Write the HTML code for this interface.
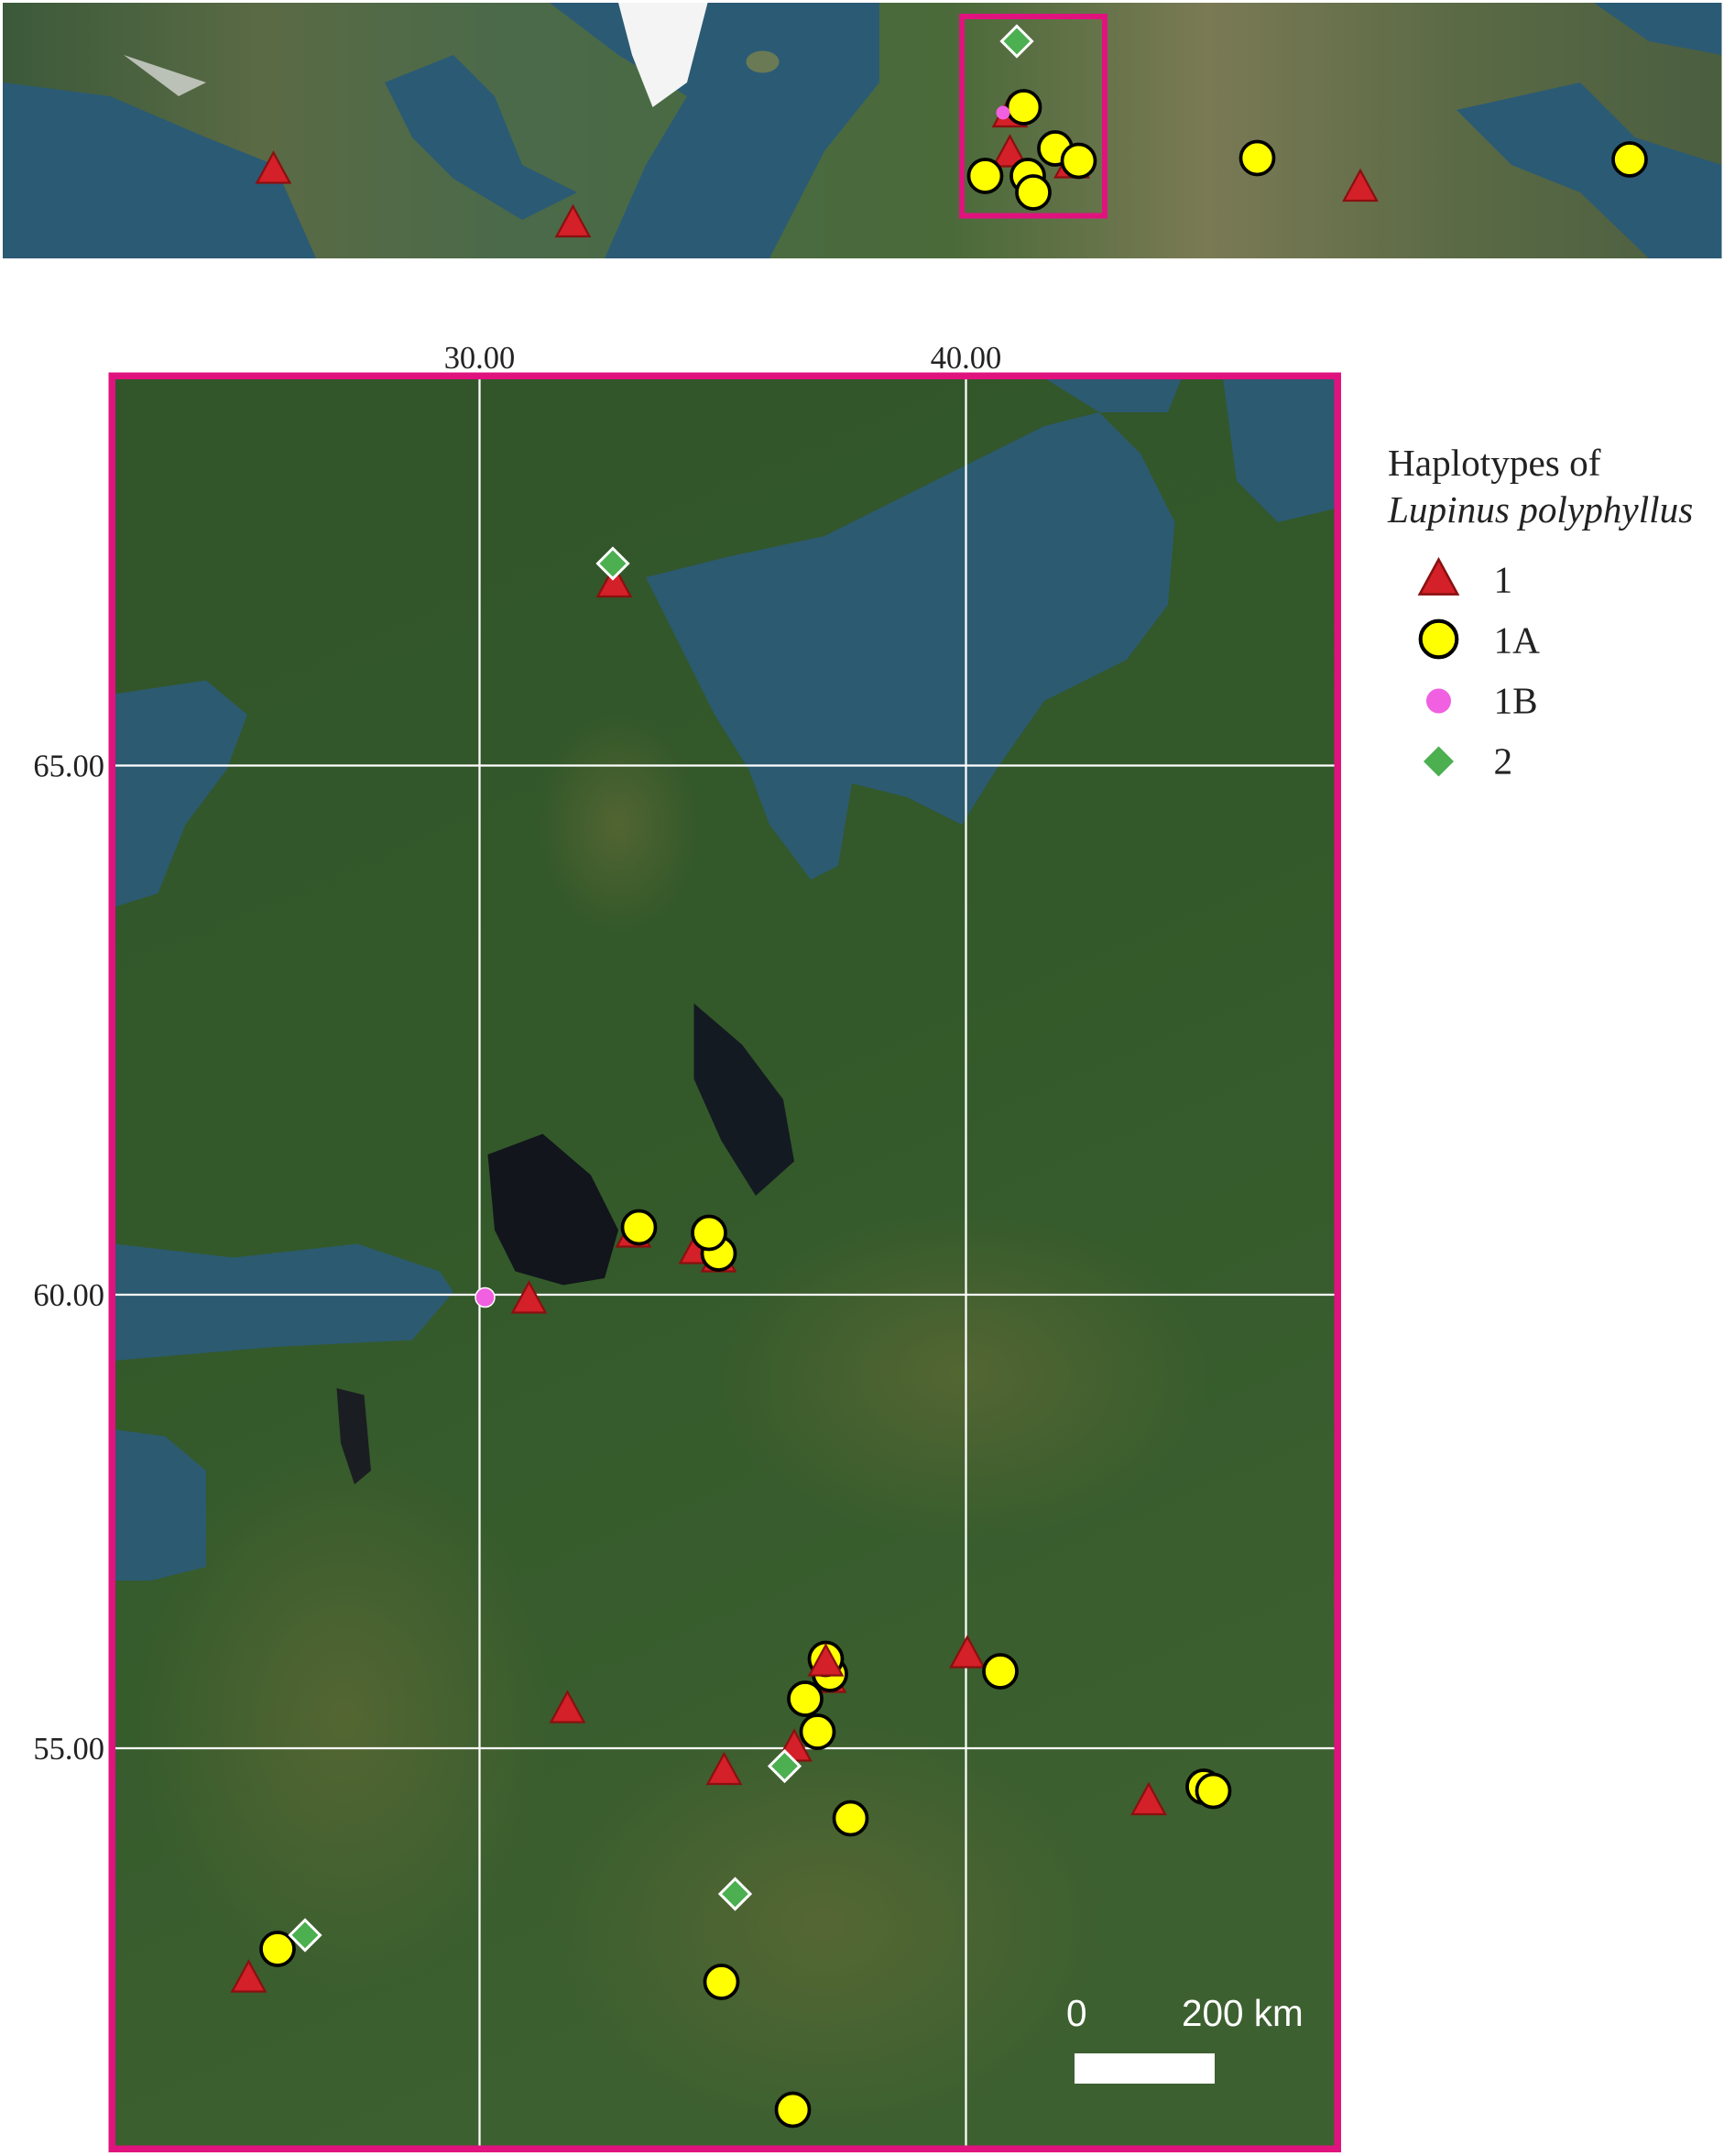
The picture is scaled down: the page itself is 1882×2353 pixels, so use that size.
<!DOCTYPE html>
<html><head><meta charset="utf-8"><style>html,body{margin:0;padding:0;background:#fff}svg{display:block}</style></head><body>
<svg width="1882" height="2353" viewBox="0 0 1254.67 1568.67" xmlns="http://www.w3.org/2000/svg">
<defs>
<linearGradient id="top" x1="0" x2="1" y1="0" y2="0">
<stop offset="0" stop-color="#3b5a3a"/><stop offset="0.15" stop-color="#5a6a45"/><stop offset="0.3" stop-color="#4a6a4a"/><stop offset="0.55" stop-color="#4a6a3a"/><stop offset="0.7" stop-color="#7a7a55"/><stop offset="0.85" stop-color="#5a6a45"/><stop offset="1" stop-color="#4a5e40"/>
</linearGradient>
<linearGradient id="land" x1="0" x2="0.3" y1="0" y2="1">
<stop offset="0" stop-color="#32552a"/><stop offset="0.5" stop-color="#33592a"/><stop offset="1" stop-color="#3d6030"/>
</linearGradient>
<radialGradient id="brn" cx="0.5" cy="0.5" r="0.5"><stop offset="0" stop-color="#5f6a35" stop-opacity="0.7"/><stop offset="1" stop-color="#5f6a35" stop-opacity="0"/></radialGradient>
<clipPath id="mc"><rect x="83" y="275" width="889" height="1287"/></clipPath>
<g id="tri"><path d="M0,-13 L12,9 L-12,9 Z" fill="#d42028" stroke="#8a1010" stroke-width="1.5"/></g>
<g id="cir"><circle r="12" fill="#ffff00" stroke="#000" stroke-width="2.5"/></g>
<g id="dia"><path d="M0,-11 L11,0 L0,11 L-11,0 Z" fill="#4caf50" stroke="#fff" stroke-width="2"/></g>
</defs>
<rect x="2" y="2" width="1251" height="186" fill="url(#top)"/>
<path d="M2,60 L80,70 L150,100 L200,120 L230,188 L2,188 Z" fill="#2b5a75"/>
<path d="M280,60 L330,40 L360,70 L380,120 L420,140 L380,160 L330,130 L300,100 Z" fill="#2b5a75"/>
<path d="M400,2 L640,2 L640,60 L600,110 L560,188 L440,188 L470,120 L500,70 L450,40 Z" fill="#2b5a75"/>
<path d="M450,2 L515,2 L500,60 L475,78 L460,40 Z" fill="#f4f4f4"/>
<path d="M90,40 L150,60 L130,70 Z" fill="#e8e8e8" opacity="0.7"/>
<path d="M1060,80 L1150,60 L1190,100 L1253,120 L1253,188 L1200,188 L1150,140 L1100,120 Z" fill="#2b5a75"/>
<path d="M1160,2 L1253,2 L1253,40 L1200,30 Z" fill="#2b5a75"/>
<ellipse cx="555" cy="45" rx="12" ry="8" fill="#6a7a55"/>
<rect x="700" y="12" width="104" height="145" fill="none" stroke="#e0137e" stroke-width="4"/>
<use href="#tri" x="199" y="124"/><use href="#tri" x="417" y="163"/><use href="#tri" x="735" y="83"/><use href="#tri" x="735" y="112"/><use href="#tri" x="780" y="120"/><use href="#tri" x="990" y="137"/>
<use href="#cir" x="745" y="78"/><use href="#cir" x="768" y="108"/><use href="#cir" x="785" y="117"/><use href="#cir" x="717" y="128"/><use href="#cir" x="748" y="128"/><use href="#cir" x="752" y="140"/><use href="#cir" x="915" y="115"/><use href="#cir" x="1186" y="116"/>
<circle cx="730" cy="82" r="5" fill="#f060e0"/>
<use href="#dia" x="740" y="30"/>
<g clip-path="url(#mc)">
<rect x="83" y="275" width="889" height="1287" fill="url(#land)"/>
<ellipse cx="450" cy="600" rx="60" ry="80" fill="url(#brn)"/>
<ellipse cx="600" cy="1400" rx="200" ry="150" fill="url(#brn)"/>
<ellipse cx="700" cy="1000" rx="180" ry="120" fill="url(#brn)"/>
<ellipse cx="250" cy="1250" rx="150" ry="200" fill="url(#brn)"/>
<path d="M470,420 L530,405 L600,390 L660,360 L720,330 L760,310 L800,300 L830,330 L855,380 L850,440 L820,480 L760,510 L725,560 L700,600 L660,580 L620,570 L610,630 L590,640 L560,600 L545,560 L520,520 L500,480 Z" fill="#2c5a70"/>
<path d="M760,275 L860,275 L850,300 L800,300 Z" fill="#2c5a70"/>
<path d="M890,275 L972,275 L972,370 L930,380 L900,350 Z" fill="#2c5a70"/>
<path d="M83,505 L150,495 L180,520 L165,560 L135,600 L115,650 L83,660 Z" fill="#2c5a70"/>
<path d="M83,905 L170,915 L260,905 L320,925 L330,940 L300,975 L200,980 L83,990 Z" fill="#2c5a70"/>
<path d="M83,1040 L120,1045 L150,1070 L150,1140 L110,1150 L83,1150 Z" fill="#2c5a70"/>
<path d="M355,840 L395,825 L430,855 L450,895 L440,930 L410,935 L375,925 L360,895 Z" fill="#12151c"/>
<path d="M505,730 L540,760 L570,800 L578,845 L550,870 L525,830 L505,785 Z" fill="#141a22"/>
<path d="M245,1010 L265,1015 L270,1070 L258,1080 L248,1050 Z" fill="#1a1e22"/>
<g stroke="#fff" stroke-width="1.5">
<line x1="349" y1="275" x2="349" y2="1562"/><line x1="703" y1="275" x2="703" y2="1562"/>
<line x1="83" y1="557" x2="972" y2="557"/><line x1="83" y1="942" x2="972" y2="942"/><line x1="83" y1="1272" x2="972" y2="1272"/>
</g>
<use href="#tri" x="447" y="425"/><use href="#tri" x="385" y="946"/><use href="#tri" x="461" y="898"/><use href="#tri" x="507" y="910"/><use href="#tri" x="523" y="916"/><use href="#tri" x="413" y="1244"/><use href="#tri" x="527" y="1289"/><use href="#tri" x="603" y="1222"/><use href="#tri" x="578" y="1272"/><use href="#tri" x="704" y="1204"/><use href="#tri" x="836" y="1311"/><use href="#tri" x="181" y="1440"/>
<use href="#cir" x="523" y="912"/><use href="#cir" x="465" y="893"/><use href="#cir" x="516" y="897"/><use href="#cir" x="604" y="1218"/><use href="#cir" x="601" y="1207"/><use href="#tri" x="601" y="1210"/><use href="#cir" x="586" y="1236"/><use href="#cir" x="595" y="1260"/><use href="#cir" x="728" y="1216"/><use href="#cir" x="619" y="1323"/><use href="#cir" x="876" y="1300"/><use href="#cir" x="883" y="1303"/><use href="#cir" x="525" y="1442"/><use href="#cir" x="577" y="1535"/><use href="#cir" x="202" y="1418"/>
<use href="#dia" x="446" y="410"/><use href="#dia" x="571" y="1285"/><use href="#dia" x="535" y="1378"/><use href="#dia" x="222" y="1408"/>
<circle cx="353" cy="944" r="7" fill="#f060e0" stroke="#fff" stroke-width="1"/>
<g font-family="Liberation Sans, sans-serif" font-size="27" fill="#fff">
<text x="776" y="1474">0</text><text x="860" y="1474">200 km</text>
</g>
<rect x="782" y="1494" width="102" height="22" fill="#fff"/>
</g>
<rect x="81.5" y="273.5" width="892" height="1290" fill="none" stroke="#e0137e" stroke-width="5"/>
<g font-family="Liberation Serif, serif" font-size="23" fill="#222">
<text x="349" y="268" text-anchor="middle">30.00</text><text x="703" y="268" text-anchor="middle">40.00</text>
<text x="76" y="565" text-anchor="end">65.00</text><text x="76" y="950" text-anchor="end">60.00</text><text x="76" y="1280" text-anchor="end">55.00</text>
</g>
<g font-family="Liberation Serif, serif" font-size="27.5" fill="#222">
<text x="1010" y="346">Haplotypes of</text>
<text x="1010" y="380" font-style="italic">Lupinus polyphyllus</text>
<text x="1087" y="431">1</text><text x="1087" y="475">1A</text><text x="1087" y="519">1B</text><text x="1087" y="563">2</text>
</g>
<g transform="translate(1047,422) scale(1.15)"><use href="#tri"/></g>
<g transform="translate(1047,465) scale(1.1)"><use href="#cir"/></g>
<circle cx="1047" cy="510" r="9" fill="#f060e0"/>
<path d="M1047,543 L1058,554 L1047,565 L1036,554 Z" fill="#4caf50"/>
</svg>
</body></html>
